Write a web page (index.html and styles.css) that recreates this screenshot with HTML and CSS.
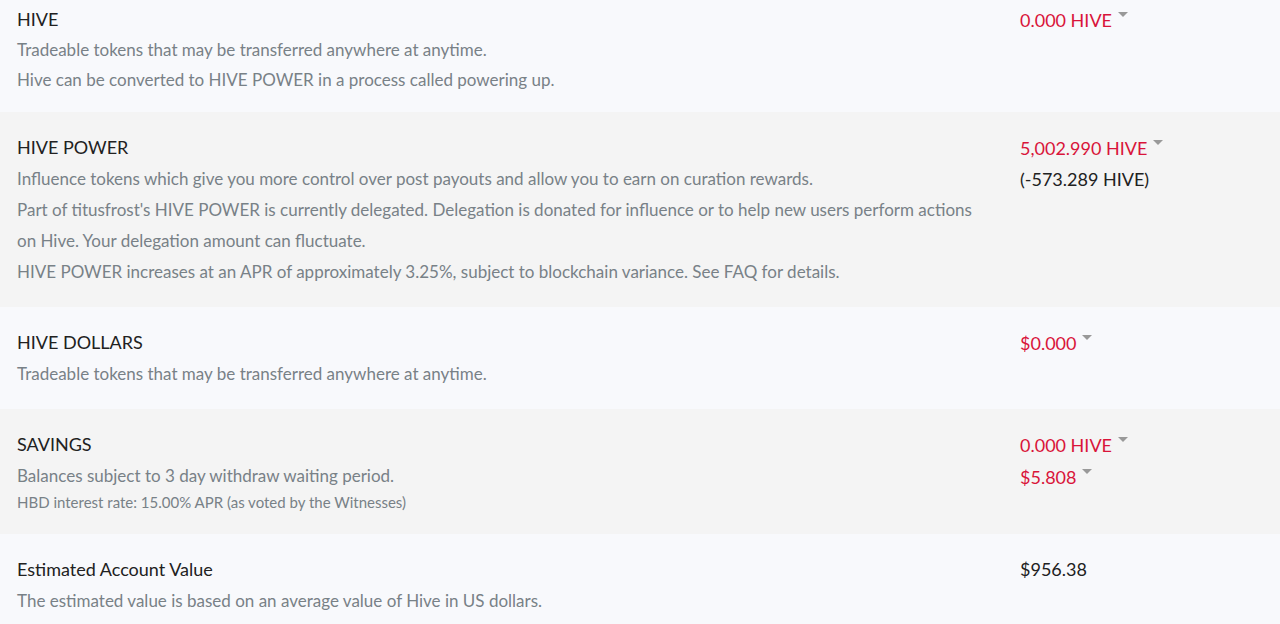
FILE: index.html
```html
<!DOCTYPE html>
<html lang="en">
<head>
  <meta charset="UTF-8">
  <meta name="viewport" content="width=device-width, initial-scale=1.0">
  <title>Wallet</title>
  <link rel="stylesheet" href="styles.css">
</head>
<body>
  <div class="wallet">
    <div class="balance-row first">
      <div class="info">
        <div class="title">HIVE</div>
        <div class="desc">Tradeable tokens that may be transferred anywhere at anytime.</div>
        <div class="desc">Hive can be converted to HIVE POWER in a process called powering up.</div>
      </div>
      <div class="amounts">
        <div class="value">0.000 HIVE<span class="caret"></span></div>
      </div>
    </div>

    <div class="balance-row alt">
      <div class="info">
        <div class="title">HIVE POWER</div>
        <div class="desc">Influence tokens which give you more control over post payouts and allow you to earn on curation rewards.</div>
        <div class="desc">Part of titusfrost's HIVE POWER is currently delegated. Delegation is donated for influence or to help new users perform actions on Hive. Your delegation amount can fluctuate.</div>
        <div class="desc">HIVE POWER increases at an APR of approximately 3.25%, subject to blockchain variance. See FAQ for details.</div>
      </div>
      <div class="amounts">
        <div class="value">5,002.990 HIVE<span class="caret"></span></div>
        <div class="plain">(-573.289 HIVE)</div>
      </div>
    </div>

    <div class="balance-row">
      <div class="info">
        <div class="title">HIVE DOLLARS</div>
        <div class="desc">Tradeable tokens that may be transferred anywhere at anytime.</div>
      </div>
      <div class="amounts">
        <div class="value">$0.000<span class="caret"></span></div>
      </div>
    </div>

    <div class="balance-row alt">
      <div class="info">
        <div class="title">SAVINGS</div>
        <div class="desc">Balances subject to 3 day withdraw waiting period.</div>
        <div class="note">HBD interest rate: 15.00% APR (as voted by the Witnesses)</div>
      </div>
      <div class="amounts">
        <div class="value">0.000 HIVE<span class="caret"></span></div>
        <div class="value">$5.808<span class="caret"></span></div>
      </div>
    </div>

    <div class="balance-row">
      <div class="info">
        <div class="title">Estimated Account Value</div>
        <div class="desc">The estimated value is based on an average value of Hive in US dollars.</div>
      </div>
      <div class="amounts">
        <div class="plain">$956.38</div>
      </div>
    </div>
  </div>
</body>
</html>
```

FILE: styles.css
```css
body {
  margin: 0;
  padding: 0;
  font-family: Lato, "Open Sans", sans-serif;
  background-color: #f8f9fc;
  color: #212121;
}

.wallet {
  width: 100%;
}

.balance-row {
  display: grid;
  grid-template-columns: 1003px 1fr;
  padding: 20px 0;
  background-color: #f8f9fc;
}

.balance-row.first {
  padding-top: 4px;
  padding-bottom: 18px;
}

.balance-row.first .desc {
  line-height: 29.5px;
}

.balance-row.alt {
  background-color: #f4f4f4;
}

.info {
  padding: 0 17px;
}

.title {
  font-size: 18px;
  line-height: 31px;
  color: #212121;
}

.desc {
  font-size: 17px;
  line-height: 31px;
  color: #788187;
}

.note {
  font-size: 15px;
  line-height: 23px;
  color: #788187;
}

.amounts {
  padding: 0 17px;
}

.value {
  font-size: 18px;
  line-height: 32px;
  color: #d9143a;
}

.plain {
  font-size: 18px;
  line-height: 31px;
  color: #212121;
}

.caret {
  display: inline-block;
  width: 0;
  height: 0;
  margin-left: 6px;
  border-left: 5.5px solid transparent;
  border-right: 5.5px solid transparent;
  border-top: 5px solid #999;
  vertical-align: 0.55em;
}
```
